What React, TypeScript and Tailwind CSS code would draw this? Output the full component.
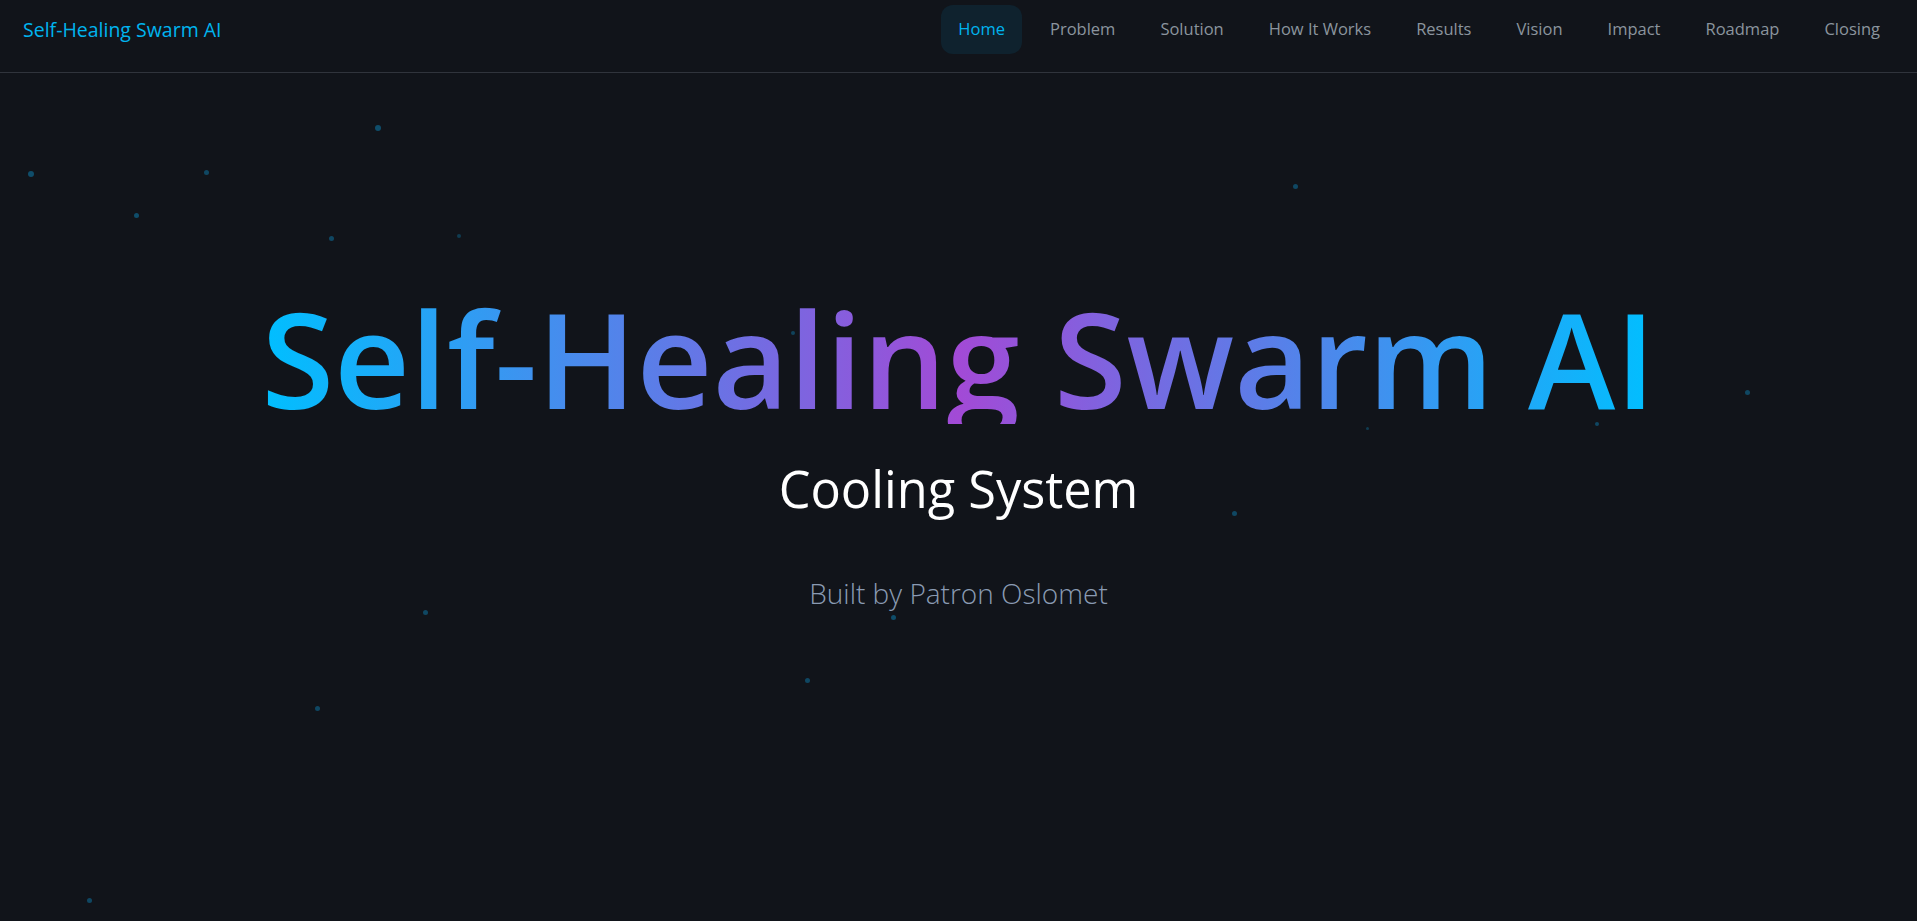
import React from "react";

const links = ["Home", "Problem", "Solution", "How It Works", "Results", "Vision", "Impact", "Roadmap", "Closing"];

const dots: { x: number; y: number; s: number; o: number }[] = [
  { x: 31, y: 174, s: 6, o: 1 },
  { x: 136, y: 215, s: 5, o: 1 },
  { x: 206, y: 172, s: 5, o: 0.9 },
  { x: 378, y: 128, s: 6, o: 1 },
  { x: 331, y: 238, s: 5, o: 0.9 },
  { x: 459, y: 236, s: 4, o: 0.7 },
  { x: 1295, y: 186, s: 5, o: 0.9 },
  { x: 1747, y: 392, s: 5, o: 0.9 },
  { x: 1597, y: 424, s: 4, o: 0.9 },
  { x: 1367, y: 428, s: 3, o: 0.7 },
  { x: 1234, y: 513, s: 5, o: 0.9 },
  { x: 793, y: 333, s: 4, o: 0.8 },
  { x: 425, y: 612, s: 5, o: 0.9 },
  { x: 893, y: 617, s: 5, o: 1 },
  { x: 807, y: 680, s: 5, o: 0.9 },
  { x: 317, y: 708, s: 5, o: 0.9 },
  { x: 89, y: 900, s: 5, o: 0.9 },
];

export default function App() {
  return (
    <div
      className="relative w-full h-[921px] overflow-hidden bg-[#11141a]"
      style={{ fontFamily: '"Open Sans", "Noto Sans", sans-serif' }}
    >
      {dots.map((d, i) => (
        <span
          key={i}
          className="absolute rounded-full bg-[#0f4d6a]"
          style={{ left: d.x - d.s / 2, top: d.y - d.s / 2, width: d.s, height: d.s, opacity: d.o }}
        />
      ))}
      <nav className="relative flex h-[73px] items-start justify-between border-b border-[#30343c] pl-[23px] pr-5 pt-[5px]">
        <div className="flex h-[49px] items-center text-[19.5px] font-medium text-[#00b4ef]">Self-Healing Swarm AI</div>
        <ul className="flex gap-[11px]">
          {links.map((l, i) => (
            <li
              key={l}
              className={
                i === 0
                  ? "flex h-[49px] items-center rounded-xl bg-[#0f222e] px-[17px] text-[16.5px] text-[#00b4ef]"
                  : "flex h-[49px] items-center rounded-xl px-[17px] text-[16.5px] text-[#8b949e]"
              }
            >
              {l}
            </li>
          ))}
        </ul>
      </nav>
      <main className="relative flex flex-col items-center pt-[219px]">
        <h1 className="inline-block bg-linear-to-r/srgb from-[#00bfff] via-[#a24ad6] to-[#00bfff] bg-clip-text text-[132px] font-semibold leading-none text-transparent">
          Self-Healing Swarm AI
        </h1>
        <h2 className="mt-[40px] text-[50.5px] font-medium leading-none text-white">Cooling System</h2>
        <p className="mt-[64px] text-[28px] font-light leading-none text-[#8a9bb3]">Built by Patron Oslomet</p>
      </main>
    </div>
  );
}
